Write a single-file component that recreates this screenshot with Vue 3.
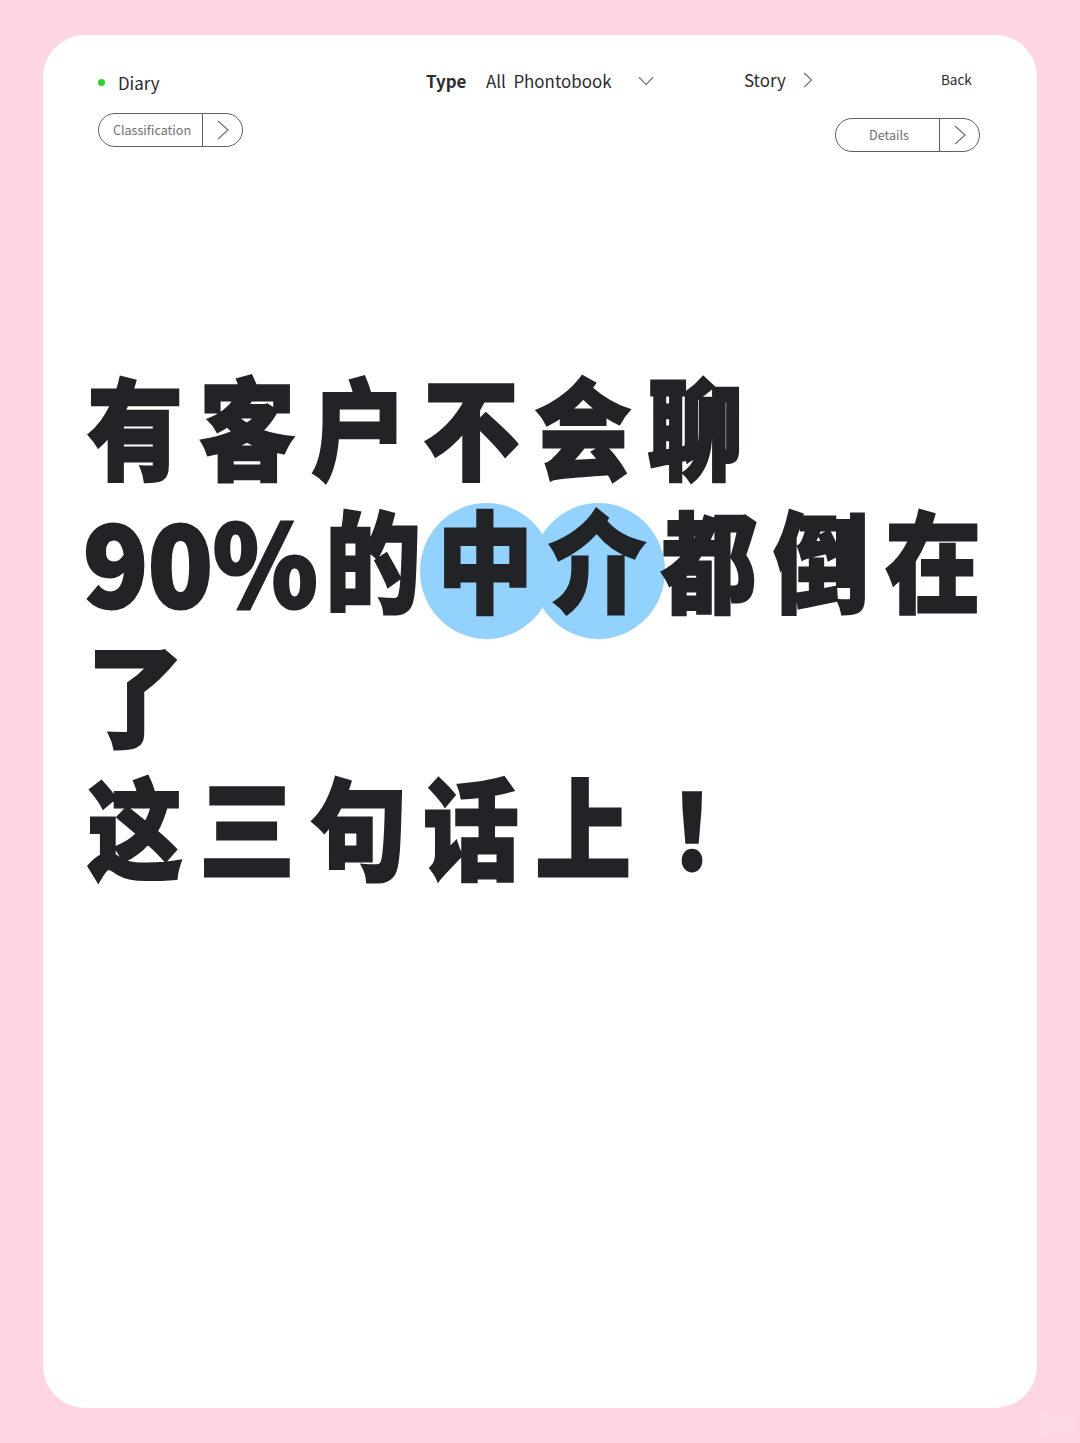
<script setup>
const lines = [
  [...'有客户不会聊'].map((t) => ({ t })),
  [
    { t: '90%', wide: true },
    { t: '的' },
    { t: '中', mark: true },
    { t: '介', mark: true },
    { t: '都' },
    { t: '倒' },
    { t: '在' },
  ],
  [{ t: '了' }],
  [...'这三句话上'].map((t) => ({ t })).concat({ t: '！', bang: true }),
]
</script>

<template>
  <main class="page">
    <section class="card">
      <header class="head">
        <nav class="nav">
          <div class="diary"><i class="dot"></i><span>Diary</span></div>
          <div class="type">
            <b>Type</b>
            <span class="all">All&nbsp; Phontobook</span>
            <svg class="chev-down" viewBox="0 0 16 10"><path d="M1 1.2 8 8.6 15 1.2" /></svg>
          </div>
          <div class="story">
            <span>Story</span>
            <svg class="chev-right" viewBox="0 0 10 16"><path d="M1.2 1 8.6 8 1.2 15" /></svg>
          </div>
          <span class="back">Back</span>
        </nav>
        <div class="pills">
          <div class="pill">
            <span class="pill-label">Classification</span>
            <span class="pill-arrow"><svg viewBox="0 0 12 20"><path d="M1 1 11 10 1 19" /></svg></span>
          </div>
          <div class="pill details">
            <span class="pill-label">Details</span>
            <span class="pill-arrow"><svg viewBox="0 0 12 20"><path d="M1 1 11 10 1 19" /></svg></span>
          </div>
        </div>
      </header>
      <h1 class="title">
        <div v-for="(line, i) in lines" :key="i" class="line">
          <span
            v-for="(part, j) in line"
            :key="j"
            class="cell"
            :class="{ mark: part.mark, wide: part.wide, bang: part.bang }"
          ><span class="glyph">{{ part.t }}</span></span>
        </div>
      </h1>
    </section>
    <i class="stamp"></i>
  </main>
</template>

<style scoped>
.page {
  position: relative;
  box-sizing: border-box;
  width: 1080px;
  height: 1443px;
  padding: 35px 43px;
  background: #fdd5e3;
  font-family: "Noto Sans CJK SC", "Noto Sans", sans-serif;
}
.stamp {
  position: absolute;
  left: 1039px;
  top: 1415px;
  width: 36px;
  height: 18px;
  border-radius: 4px;
  background: rgba(255, 255, 255, 0.07);
}
.card {
  box-sizing: border-box;
  height: 1373px;
  padding: 0 57px 0 40px;
  background: #fff;
  border-radius: 42px;
  isolation: isolate;
}
.head {
  padding: 33px 0 0 15px;
}
.nav {
  display: flex;
  align-items: center;
  height: 28px;
  color: #2a2b2e;
  font-size: 16.9px;
}
.diary {
  display: flex;
  align-items: center;
  width: 328px;
}
.dot {
  width: 7px;
  height: 7px;
  margin-right: 13px;
  border-radius: 50%;
  background: #2fd12c;
}
.type {
  display: flex;
  align-items: center;
  width: 318px;
  transform: translateY(-1px);
}
.type b {
  width: 60px;
  font-weight: 700;
}
.type span,
.type b {
  margin-bottom: 2px;
}
.all {
  width: 152px;
}
.chev-down {
  width: 16px;
  height: 10px;
}
.story {
  display: flex;
  align-items: center;
  width: 197px;
  transform: translateY(-2px);
}
.story span {
  width: 59px;
  margin-bottom: 2px;
}
.chev-right {
  width: 10px;
  height: 16px;
}
.back {
  font-size: 13.5px;
  transform: translateY(-3px);
}
svg {
  display: block;
  fill: none;
  stroke: #77787a;
  stroke-width: 1.3;
}
.pills {
  display: flex;
  justify-content: space-between;
  align-items: flex-start;
  margin-top: 17px;
}
.pill {
  box-sizing: border-box;
  display: flex;
  width: 145px;
  height: 34px;
  border: 1.2px solid #5f6063;
  border-radius: 17px;
}
.details {
  margin-top: 5px;
}
.pill-label {
  flex: 1;
  display: flex;
  align-items: center;
  justify-content: center;
  padding-left: 3px;
  padding-bottom: 2px;
  font-size: 12.6px;
  color: #6f7073;
}
.pill-arrow {
  display: flex;
  align-items: center;
  justify-content: center;
  width: 39px;
  border-left: 1.2px solid #5f6063;
}
.pill-arrow svg {
  width: 12px;
  height: 20px;
}
.title {
  margin: 205px 0 0 -4px;
  font-size: 112px;
  font-weight: 900;
  line-height: 133.4px;
  color: #212327;
  -webkit-text-stroke: 3px #212327;
}
.line {
  height: 133.4px;
  white-space: nowrap;
}
.cell {
  position: relative;
  display: inline-block;
  width: 112px;
  text-align: center;
}
.glyph {
  display: inline-block;
  transform: scale(0.85, 0.97);
}
.wide {
  width: 238px;
}
.wide .glyph {
  transform: translate(-2px, 2px) scale(0.95, 1);
}
.bang {
  font-family: "Noto Sans CJK TC", sans-serif;
}
.bang .glyph {
  transform: translate(-3px, 2px) scale(0.8, 0.92);
}
.mark::before {
  content: "";
  position: absolute;
  z-index: -1;
  left: -9px;
  top: 13px;
  width: 133px;
  height: 136px;
  border-radius: 50%;
  background: #94d2fe;
}
</style>
